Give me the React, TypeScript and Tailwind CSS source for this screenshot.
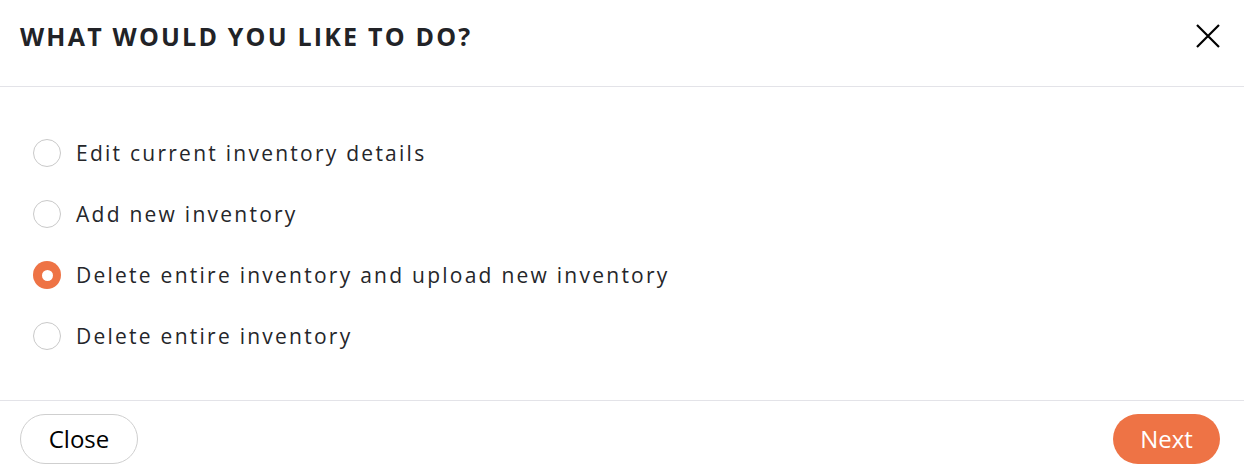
import React, { useState } from "react";

const options = [
  "Edit current inventory details",
  "Add new inventory",
  "Delete entire inventory and upload new inventory",
  "Delete entire inventory",
];

export default function App() {
  const [selected, setSelected] = useState(2);
  return (
    <div
      className="w-[1244px] h-[476px] bg-white flex flex-col text-[#25262a]"
      style={{ fontFamily: "'Open Sans', 'Noto Sans', sans-serif" }}
    >
      <div className="h-[87px] shrink-0 flex items-center justify-between pl-5 pr-6 pb-[14px] border-b border-[#e3e3e8]">
        <h1 className="text-[25px] font-bold tracking-[2.2px] leading-none text-[#222327]">
          WHAT WOULD YOU LIKE TO DO?
        </h1>
        <button className="w-6 h-6 flex items-center justify-center text-black">
          <svg width="24" height="24" viewBox="0 0 24 24" fill="none" stroke="currentColor" strokeWidth="2.2">
            <path d="M1 1L23 23M23 1L1 23" />
          </svg>
        </button>
      </div>
      <div className="flex-1 flex flex-col pt-[52px] pl-[33px] gap-[33px]">
        {options.map((o, i) => (
          <label key={o} className="flex items-center gap-[15px] h-[28px] cursor-pointer" onClick={() => setSelected(i)}>
            {selected === i ? (
              <span className="w-[28px] h-[28px] rounded-full bg-[#ee7345] flex items-center justify-center">
                <span className="w-[11px] h-[11px] rounded-full bg-white" />
              </span>
            ) : (
              <span className="w-[28px] h-[28px] rounded-full border border-[#c9c9c9] bg-white" />
            )}
            <span className="text-[21px] tracking-[2.25px] leading-none">{o}</span>
          </label>
        ))}
      </div>
      <div className="h-[76px] shrink-0 border-t border-[#e3e3e8] flex items-center justify-between pl-5 pr-6">
        <button className="h-[50px] w-[118px] rounded-full border border-[#cfcfcf] bg-white text-[24px] text-black">
          Close
        </button>
        <button className="h-[50px] w-[107px] rounded-full bg-[#ee7345] text-[24px] text-white">
          Next
        </button>
      </div>
    </div>
  );
}
